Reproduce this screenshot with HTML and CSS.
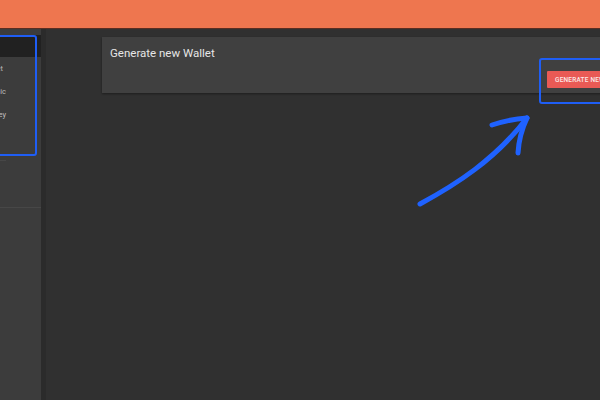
FILE: index.html
```html
<!DOCTYPE html>
<html>
<head>
<meta charset="utf-8">
<link rel="stylesheet" href="styles.css">
</head>
<body>
<div class="topbar"></div>
<div class="layout">
  <aside class="sidebar">
    <div class="side-head"></div>
    <ul class="side-list">
      <li class="first">Wallet</li>
      <li>Mnemonic</li>
      <li>Private Key</li>
    </ul>
    <div class="side-section"></div>
  </aside>
  <div class="gutter"></div>
  <main class="main">
    <section class="card">
      <h1 class="card-title">Generate new Wallet</h1>
      <div class="card-actions">
        <button class="btn">Generate new wallet</button>
      </div>
    </section>
  </main>
</div>
<div class="mark mark-side"></div>
<div class="mark mark-btn"></div>
<svg class="arrow" width="600" height="400" viewBox="0 0 600 400">
  <path d="M420 204 C 455 185, 495 160, 527 118" />
  <path d="M492 125 Q 510 119 527 118 Q 519 135 518 153" />
</svg>
</body>
</html>
```
FILE: styles.css
```css
html, body {
  margin: 0;
  padding: 0;
}
body {
  width: 600px;
  height: 400px;
  overflow: hidden;
  background: #303030;
  font-family: Roboto, "Liberation Sans", sans-serif;
  position: relative;
}
.topbar {
  height: 29px;
  background: #ee764f;
  border-bottom: 1px solid #5a2e22;
  box-sizing: border-box;
}
.layout {
  display: flex;
  height: 371px;
}
.sidebar {
  flex: 0 0 41px;
  width: 41px;
  background: #3c3c3c;
  padding-top: 6px;
  box-sizing: border-box;
  overflow: hidden;
}
.side-head {
  height: 22px;
  background: #212121;
}
.side-list {
  list-style: none;
  margin: 0 0 0 -80px;
  padding: 0 0 34px;
  width: 86px;
  text-align: right;
  border-bottom: 1px solid #474747;
}
.side-list li {
  height: 23px;
  line-height: 23px;
  font-size: 7.5px;
  color: #bdbdbd;
  white-space: nowrap;
}
.side-list li.first {
  padding-right: 3px;
}
.side-section {
  height: 46px;
  border-bottom: 1px solid #474747;
}
.gutter {
  flex: 0 0 5px;
  background: #2b2b2b;
}
.main {
  flex: 1 1 auto;
  min-width: 0;
  padding: 8px 0 0 56px;
}
.card {
  background: #404040;
  height: 56px;
  margin-right: -40px;
  padding: 9px 8px 0;
  box-sizing: border-box;
  box-shadow: 0 1px 2px rgba(0,0,0,0.4);
}
.card-title {
  margin: 0;
  font-size: 11.5px;
  font-weight: 400;
  color: #e6e6e6;
  line-height: 14px;
}
.card-actions {
  display: flex;
  padding-left: 437px;
  margin-top: 11px;
}
.btn {
  flex: 0 0 auto;
  background: #e95a55;
  color: #fbe9e8;
  border: none;
  height: 17px;
  padding: 0 8px;
  font-family: Roboto, "Liberation Sans", sans-serif;
  font-size: 6.5px;
  font-weight: 500;
  letter-spacing: 0.2px;
  text-transform: uppercase;
  white-space: nowrap;
  border-radius: 1px;
}
.mark {
  position: absolute;
  border: 2px solid #1f5ef5;
  border-radius: 3px;
  box-sizing: border-box;
}
.mark-side {
  left: -10px;
  top: 35px;
  width: 47px;
  height: 121px;
}
.mark-btn {
  left: 539px;
  top: 58px;
  width: 80px;
  height: 46px;
}
.arrow {
  position: absolute;
  left: 0;
  top: 0;
  pointer-events: none;
}
.arrow path {
  fill: none;
  stroke: #1f62ff;
  stroke-width: 5;
  stroke-linecap: round;
  stroke-linejoin: round;
}
```
